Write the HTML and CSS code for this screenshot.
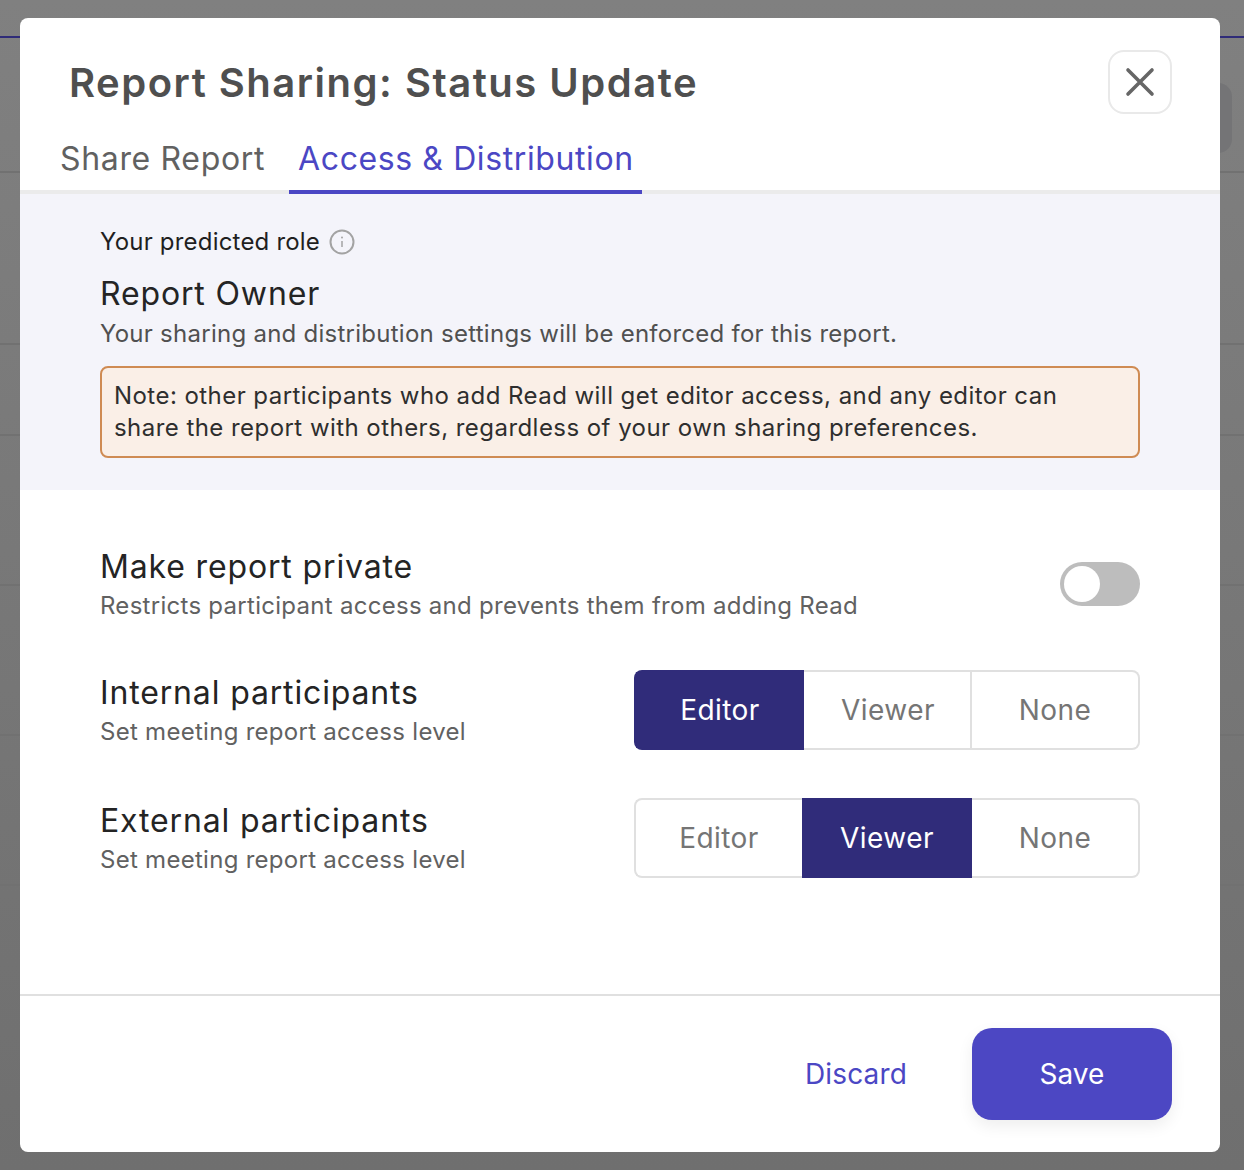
FILE: index.html
```html
<!DOCTYPE html>
<html lang="en">
<head>
<meta charset="utf-8">
<title>Report Sharing</title>
<link rel="stylesheet" href="styles.css">
</head>
<body>
<div class="backdrop">
  <div class="bg-line bg-line-top"></div>
  <div class="bg-line bg-l1"></div>
  <div class="bg-line bg-l2"></div>
  <div class="bg-line bg-l3"></div>
  <div class="bg-line bg-l4"></div>
  <div class="bg-line bg-l5"></div>
  <div class="bg-line bg-l6"></div>
  <div class="bg-line bg-l7"></div>
  <div class="bg-blob"></div>
</div>
<main class="modal">
  <header class="modal-head">
    <h1 class="title">Report Sharing: Status Update</h1>
    <button class="close" aria-label="Close">
      <svg width="32" height="32" viewBox="0 0 32 32"><path d="M4 4 L28 28 M28 4 L4 28" fill="none" stroke="#666" stroke-width="3.6" stroke-linecap="round"/></svg>
    </button>
  </header>
  <nav class="tabs">
    <div class="tab">Share Report</div>
    <div class="tab tab-active">Access &amp; Distribution</div>
  </nav>
  <section class="role">
    <div class="role-label">Your predicted role
      <svg class="info" width="26" height="26" viewBox="0 0 26 26"><circle cx="13" cy="13" r="11.5" fill="none" stroke="#a3a3a3" stroke-width="2"/><path d="M13 12 V18" stroke="#a3a3a3" stroke-width="1.5"/><circle cx="13" cy="8.6" r="1" fill="#a3a3a3"/></svg>
    </div>
    <div class="role-name">Report Owner</div>
    <div class="role-desc">Your sharing and distribution settings will be enforced for this report.</div>
    <div class="note">Note: other participants who add Read will get editor access, and any editor can share the report with others, regardless of your own sharing preferences.</div>
  </section>
  <section class="settings">
    <div class="row">
      <div>
        <div class="row-title">Make report private</div>
        <div class="row-desc">Restricts participant access and prevents them from adding Read</div>
      </div>
      <div class="toggle"><div class="knob"></div></div>
    </div>
    <div class="row">
      <div class="row-text">
        <div class="row-title">Internal participants</div>
        <div class="row-desc">Set meeting report access level</div>
      </div>
      <div class="seg">
        <div class="seg-item seg-on seg-first seg-a">Editor</div>
        <div class="seg-item seg-b seg-divided">Viewer</div>
        <div class="seg-item seg-last seg-c">None</div>
      </div>
    </div>
    <div class="row">
      <div class="row-text">
        <div class="row-title">External participants</div>
        <div class="row-desc">Set meeting report access level</div>
      </div>
      <div class="seg">
        <div class="seg-item seg-first seg-d">Editor</div>
        <div class="seg-item seg-on seg-e">Viewer</div>
        <div class="seg-item seg-last seg-d">None</div>
      </div>
    </div>
  </section>
  <footer class="foot">
    <button class="discard">Discard</button>
    <button class="save">Save</button>
  </footer>
</main>
</body>
</html>
```
FILE: styles.css
```css
* { box-sizing: border-box; }
html, body { margin: 0; height: 1170px; overflow: hidden; }
body {
  padding: 18px 24px 18px 20px;
  font-family: "Inter", "Noto Sans", sans-serif;
  background: #7b7b7b;
  position: relative;
}
.backdrop { position: absolute; inset: 0; background: linear-gradient(#808080, #6f6f6f); }
.bg-line { position: absolute; left: 0; right: 0; height: 2px; background: #717171; }
.bg-line-top { top: 36px; background: #2f2b78; }
.bg-l1 { top: 171px; }
.bg-l2 { top: 343px; }
.bg-l3 { top: 434px; }
.bg-l4 { top: 584px; }
.bg-l5 { top: 734px; }
.bg-l6 { top: 884px; }
.bg-l7 { top: 1034px; }
.bg-blob { position: absolute; left: 1180px; top: 83px; width: 52px; height: 70px; border-radius: 14px; background: #747476; }
.modal {
  position: relative;
  width: 1200px;
  height: 1134px;
  background: #fff;
  border-radius: 8px;
  overflow: hidden;
  display: flex;
  flex-direction: column;
}
.modal-head {
  display: flex;
  justify-content: space-between;
  align-items: flex-start;
  height: 112px;
  padding: 32px 48px 0 49px;
}
.title { margin: 4px 0 0; font-size: 40px; line-height: 58px; height: 58px; font-weight: 600; color: #4f4f4f; letter-spacing: 1.5px; white-space: nowrap; }
.close {
  width: 64px; height: 64px; padding: 0;
  background: #fff;
  border: 2px solid #e9e9e9;
  border-radius: 16px;
  display: flex; align-items: center; justify-content: center;
}
.tabs {
  display: flex;
  height: 64px;
  padding-left: 32px;
  border-bottom: 4px solid #ebebeb;
  gap: 16px;
}
.tab {
  height: 64px;
  padding: 0 8px;
  font-size: 32px;
  line-height: 58px;
  letter-spacing: 0.66px;
  color: #616161;
  white-space: nowrap;
}
.tab-active { color: #4b47c4; border-bottom: 4px solid #4b47c4; padding: 0 8px 0 9px; letter-spacing: 0.6px; }
.role {
  background: #f4f4fa;
  height: 296px;
  padding: 28px 80px 0;
}
.role-label { font-size: 24px; line-height: 40px; letter-spacing: 0.2px; color: #1f1f1f; display: flex; align-items: center; gap: 9px; }
.role-name { font-size: 32px; line-height: 40px; letter-spacing: 0.85px; color: #242424; margin-top: 12px; }
.role-desc { font-size: 24px; line-height: 36px; letter-spacing: 0.26px; color: #505050; margin-top: 2px; }
.note {
  margin-top: 14px;
  height: 92px;
  background: #faefe7;
  border: 2px solid #cf8b53;
  border-radius: 8px;
  padding: 12px 12px;
  font-size: 24px;
  line-height: 32px;
  letter-spacing: 0.45px;
  color: #2e2e2e;
}
.settings { flex: 1; padding: 52px 80px 0; display: flex; flex-direction: column; }
.row { display: flex; justify-content: space-between; align-items: flex-start; height: 128px; }
.row-text { margin-top: -2px; }
.row-title { font-size: 32px; line-height: 49px; letter-spacing: 0.85px; color: #242424; white-space: nowrap; }
.row-desc { font-size: 24px; line-height: 30px; letter-spacing: 0.28px; color: #616161; white-space: nowrap; }
.toggle { width: 80px; height: 44px; margin-top: 20px; border-radius: 22px; background: #bdbdbd; padding: 4px; }
.knob { width: 36px; height: 36px; border-radius: 50%; background: #fff; }
.seg { display: flex; width: 506px; height: 80px; }
.seg-item {
  flex: none;
  height: 80px;
  border: solid #e0e0e0;
  border-width: 2px 0;
  background: #fff;
  display: flex; align-items: center; justify-content: center;
  font-size: 28px;
  letter-spacing: 0.45px;
  color: #757575;
}
.seg-first { border-left-width: 2px; border-radius: 8px 0 0 8px; }
.seg-last { border-right-width: 2px; border-radius: 0 8px 8px 0; }
.seg-divided { border-right-width: 2px; }
.seg-a { width: 170px; }
.seg-b { width: 168px; padding-left: 2px; }
.seg-c { width: 168px; }
.seg-d { width: 168px; }
.seg-e { width: 170px; }
.seg-on { background: #302c7a; border-color: #302c7a; color: #fff; }
.foot {
  height: 158px;
  border-top: 2px solid #e0e0e0;
  display: flex;
  justify-content: flex-end;
  align-items: flex-start;
  padding: 32px 48px 0 0;
  gap: 65px;
}
.discard { background: none; border: 0; padding: 0; height: 92px; font: inherit; font-size: 28px; letter-spacing: 0.15px; color: #4b47c4; }
.save {
  width: 200px; height: 92px;
  border: 0;
  border-radius: 20px;
  background: #4c47c3;
  color: #fff;
  font: inherit;
  font-size: 28px;
  box-shadow: 0 6px 16px rgba(0,0,0,0.07);
}
```
